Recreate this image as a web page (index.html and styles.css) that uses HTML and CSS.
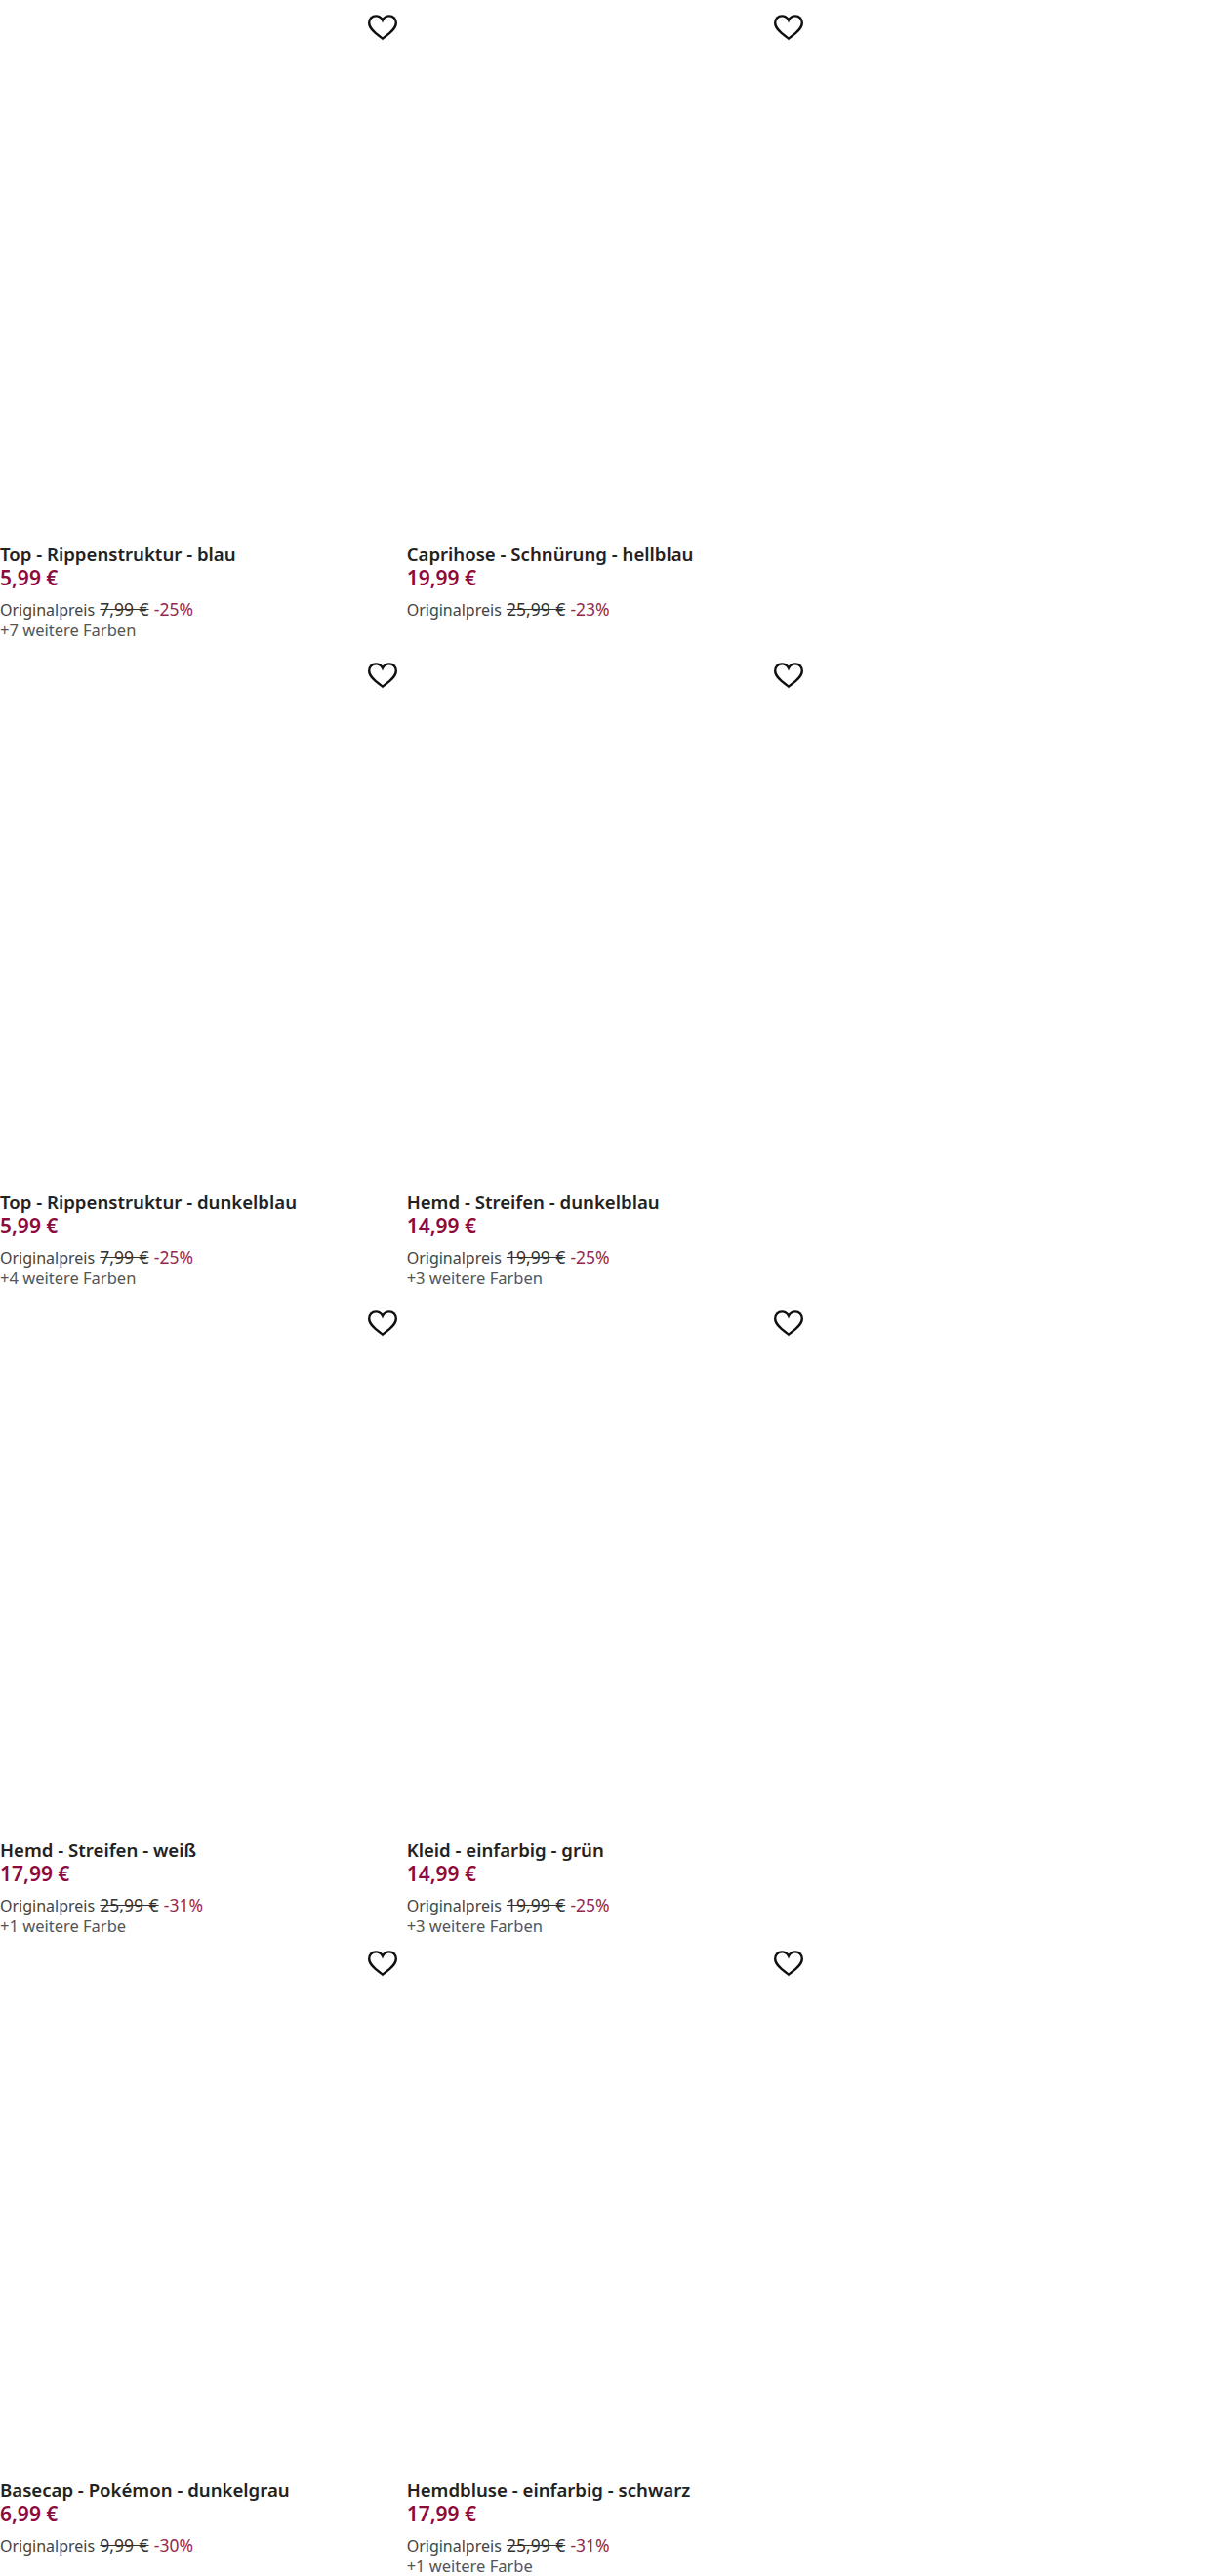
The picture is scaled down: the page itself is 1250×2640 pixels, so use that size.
FILE: index.html
```html
<!DOCTYPE html>
<html lang="de">
<head>
<meta charset="utf-8">
<title>Produkte</title>
<link rel="stylesheet" href="styles.css">
</head>
<body>
<svg class="defs" width="0" height="0" aria-hidden="true"><defs><symbol id="heart" viewBox="0 0 32 28"><path d="M16 25.6 C11.5 22 2.2 16.4 2.2 9.4 C2.2 5.4 5.2 2.4 9 2.4 C12 2.4 14.6 4 16 6.8 C17.4 4 20 2.4 23 2.4 C26.8 2.4 29.8 5.4 29.8 9.4 C29.8 16.4 20.5 22 16 25.6 Z"/></symbol></defs></svg>
<main class="grid">
<article class="card"><div class="media"><svg class="heart"><use href="#heart"/></svg></div><h2 class="title">Top - Rippenstruktur - blau</h2><p class="price">5,99 €</p><p class="orig">Originalpreis <s>7,99 €</s> <span class="off">-25%</span></p><p class="colors">+7 weitere Farben</p></article>
<article class="card"><div class="media"><svg class="heart"><use href="#heart"/></svg></div><h2 class="title">Caprihose - Schnürung - hellblau</h2><p class="price">19,99 €</p><p class="orig">Originalpreis <s>25,99 €</s> <span class="off">-23%</span></p></article>
<article class="card"><div class="media"><svg class="heart"><use href="#heart"/></svg></div><h2 class="title">Top - Rippenstruktur - dunkelblau</h2><p class="price">5,99 €</p><p class="orig">Originalpreis <s>7,99 €</s> <span class="off">-25%</span></p><p class="colors">+4 weitere Farben</p></article>
<article class="card"><div class="media"><svg class="heart"><use href="#heart"/></svg></div><h2 class="title">Hemd - Streifen - dunkelblau</h2><p class="price">14,99 €</p><p class="orig">Originalpreis <s>19,99 €</s> <span class="off">-25%</span></p><p class="colors">+3 weitere Farben</p></article>
<article class="card"><div class="media"><svg class="heart"><use href="#heart"/></svg></div><h2 class="title">Hemd - Streifen - weiß</h2><p class="price">17,99 €</p><p class="orig">Originalpreis <s>25,99 €</s> <span class="off">-31%</span></p><p class="colors">+1 weitere Farbe</p></article>
<article class="card"><div class="media"><svg class="heart"><use href="#heart"/></svg></div><h2 class="title">Kleid - einfarbig - grün</h2><p class="price">14,99 €</p><p class="orig">Originalpreis <s>19,99 €</s> <span class="off">-25%</span></p><p class="colors">+3 weitere Farben</p></article>
<article class="card"><div class="media"><svg class="heart"><use href="#heart"/></svg></div><h2 class="title">Basecap - Pokémon - dunkelgrau</h2><p class="price">6,99 €</p><p class="orig">Originalpreis <s>9,99 €</s> <span class="off">-30%</span></p></article>
<article class="card"><div class="media"><svg class="heart"><use href="#heart"/></svg></div><h2 class="title">Hemdbluse - einfarbig - schwarz</h2><p class="price">17,99 €</p><p class="orig">Originalpreis <s>25,99 €</s> <span class="off">-31%</span></p><p class="colors">+1 weitere Farbe</p></article>
</main>
</body>
</html>
```
FILE: styles.css
```css
html, body { margin: 0; padding: 0; background: #fff; }
body { font-family: "Noto Sans", "Lato", sans-serif; color: #1d1d1b; }
.defs { position: absolute; }
.grid { display: grid; grid-template-columns: repeat(2, 416.67px); grid-template-rows: 664px 664px 656px 656px; height: 2640px; overflow: hidden; }
.card { display: flex; flex-direction: column; }
.media { position: relative; height: 555px; flex: none; }
.heart { position: absolute; top: 14px; right: 9px; width: 32px; height: 28px; fill: none; stroke: #111; stroke-width: 2.4; }
.title { margin: 0; font-size: 18.6px; line-height: 25px; font-weight: 600; color: #222; }
.price { margin: 0 0 10px; font-size: 21px; line-height: 24px; font-weight: 600; color: #8c0b3c; }
.orig { margin: 0; font-size: 16px; line-height: 20px; word-spacing: 1px; color: #444; }
.orig s { font-size: 17.5px; color: #333; }
.off { font-size: 17.5px; color: #96274f; }
.colors { margin: 0; font-size: 16.5px; line-height: 21px; color: #555; }
```
